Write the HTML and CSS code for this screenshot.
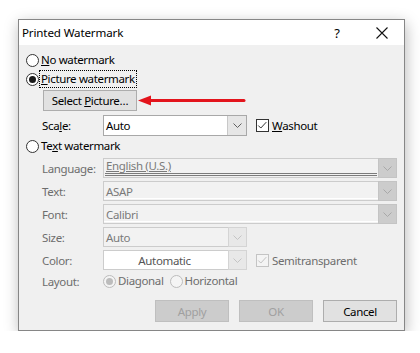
FILE: index.html
```html
<!DOCTYPE html>
<html>
<head>
<meta charset="utf-8">
<link rel="stylesheet" href="styles.css">
</head>
<body>
<div class="page">
  <div class="dialog">
    <div class="titlebar">
      <span class="title">Printed Watermark</span>
      <span class="tb-btn help">?</span>
      <span class="tb-btn close"><svg width="12" height="12" viewBox="0 0 12 12"><path d="M0.5 0.5 L11.5 11.5 M11.5 0.5 L0.5 11.5" stroke="#111" stroke-width="1.1" fill="none"/></svg></span>
    </div>
    <div class="content">
      <div class="row radio-row r1"><span class="radio"></span><span class="rlabel"><u>N</u>o watermark</span></div>
      <div class="row radio-row r2"><span class="radio checked"></span><span class="rlabel focus"><u>P</u>icture watermark</span></div>
      <div class="row btn-row">
        <span class="btn select-btn"><span>Select <u>P</u>icture…</span></span>
        <svg class="arrow" width="108" height="11" viewBox="0 0 108 11"><path d="M10 5.5 H106" stroke="#e3141c" stroke-width="3" stroke-linecap="round"/><path d="M0 5.5 L13 0.5 L13 10.5 Z" fill="#e3141c"/></svg>
      </div>
      <div class="row field-row scale-row">
        <span class="flabel">Sca<u>l</u>e:</span>
        <span class="combo small"><span class="ctext">Auto</span><span class="cbtn"><svg width="9" height="5" viewBox="0 0 9 5"><path d="M0.5 0.5 L4.5 4.5 L8.5 0.5" stroke="#606060" fill="none"/></svg></span></span>
        <span class="check checked"><svg width="13" height="11" viewBox="0 0 13 11"><path d="M1.5 5.5 L4.5 8.5 L11 1.5" stroke="#222" stroke-width="1.1" fill="none"/></svg></span>
        <span class="clabel"><u>W</u>ashout</span>
      </div>
      <div class="row radio-row r5"><span class="radio"></span><span class="rlabel">Te<u>x</u>t watermark</span></div>
      <div class="row field-row dis lang-row">
        <span class="flabel">Language:</span>
        <span class="combo wide disabled"><span class="ctext top"><span class="uline">English (U.S.)</span></span><span class="dbl"></span><span class="cbtn"><svg width="9" height="5" viewBox="0 0 9 5"><path d="M0.5 0.5 L4.5 4.5 L8.5 0.5" stroke="#a8a8a8" fill="none"/></svg></span></span>
      </div>
      <div class="row field-row dis">
        <span class="flabel">Text:</span>
        <span class="combo wide disabled edit"><span class="ctext">ASAP</span><span class="cbtn"><svg width="9" height="5" viewBox="0 0 9 5"><path d="M0.5 0.5 L4.5 4.5 L8.5 0.5" stroke="#a8a8a8" fill="none"/></svg></span></span>
      </div>
      <div class="row field-row dis">
        <span class="flabel">Font:</span>
        <span class="combo wide disabled edit"><span class="ctext">Calibri</span><span class="cbtn"><svg width="9" height="5" viewBox="0 0 9 5"><path d="M0.5 0.5 L4.5 4.5 L8.5 0.5" stroke="#a8a8a8" fill="none"/></svg></span></span>
      </div>
      <div class="row field-row dis">
        <span class="flabel">Size:</span>
        <span class="combo small disabled"><span class="ctext">Auto</span><span class="cbtn light"><svg width="9" height="5" viewBox="0 0 9 5"><path d="M0.5 0.5 L4.5 4.5 L8.5 0.5" stroke="#c4c4c4" fill="none"/></svg></span></span>
      </div>
      <div class="row field-row dis color-row">
        <span class="flabel">Color:</span>
        <span class="combo small disabled white"><span class="ctext center">Automatic</span><span class="cbtn light"><svg width="9" height="5" viewBox="0 0 9 5"><path d="M0.5 0.5 L4.5 4.5 L8.5 0.5" stroke="#c4c4c4" fill="none"/></svg></span></span>
        <span class="check dcheck"><svg width="13" height="11" viewBox="0 0 13 11"><path d="M1.5 5.5 L4.5 8.5 L11 1.5" stroke="#bdbdbd" stroke-width="1.1" fill="none"/></svg></span>
        <span class="clabel dtext">Semitransparent</span>
      </div>
      <div class="row field-row dis layout-row">
        <span class="flabel">Layout:</span>
        <span class="radio dradio checked"></span><span class="rlabel dtext">Diagonal</span>
        <span class="radio dradio h"></span><span class="rlabel dtext">Horizontal</span>
      </div>
      <div class="row buttons">
        <span class="btn dbtn">Apply</span>
        <span class="btn dbtn">OK</span>
        <span class="btn">Cancel</span>
      </div>
    </div>
  </div>
</div>
</body>
</html>
```

FILE: styles.css
```css
html, body { margin: 0; padding: 0; background: #fff; }
body { font-family: "Noto Sans", "DejaVu Sans", sans-serif; font-size: 11.5px; letter-spacing: -0.35px; color: #000; }
.page { padding: 19px 0 0 18px; }
.dialog {
  width: 387px; height: 312px; box-sizing: border-box;
  border: 1px solid #868686; background: #f0f0f0;
  box-shadow: 1px 4px 14px rgba(0,0,0,0.28);
  display: flex; flex-direction: column;
}
.titlebar {
  height: 25px; background: #fff; display: flex; align-items: center;
  padding-left: 3px; flex: none;
}
.title { flex: 1; font-size: 11.6px; letter-spacing: -0.15px; }
.tb-btn { width: 34px; height: 25px; display: flex; align-items: center; justify-content: center; }
.help { font-size: 13px; margin-right: 11px; }
.close { margin-right: 5px; }
.content { padding-top: 6px; display: flex; flex-direction: column; }
.row { display: flex; align-items: center; flex: none; }
.radio-row { height: 18px; padding-left: 7px; }
.r2 { margin-top: 1px; }
.r5 { margin-top: 1px; }
.radio {
  width: 13px; height: 13px; box-sizing: border-box; border: 1px solid #333;
  border-radius: 50%; background: #fff; flex: none; position: relative;
}
.radio.checked::after {
  content: ""; position: absolute; left: 2px; top: 2px; width: 7px; height: 7px;
  border-radius: 50%; background: #1a1a1a;
}
.rlabel { margin-left: 2px; line-height: 16px; }
.focus { outline: 1px dotted #000; outline-offset: 0; padding: 0 1px; margin-left: 1px; }
.btn-row { margin-top: 2px; height: 21px; padding-left: 24px; }
.btn {
  width: 74px; height: 100%; box-sizing: border-box; border: 1px solid #adadad;
  background: #e1e1e1; display: flex; align-items: center; justify-content: center;
}
.select-btn { width: 94px; }
.arrow { margin-left: 1px; display: block; }
.field-row { height: 20px; margin-top: 3px; padding-left: 23px; }
.scale-row { height: 21px; margin-top: 4px; }
.flabel { width: 61px; flex: none; }
.dis .flabel { color: #6d6d6d; }
.combo {
  height: 100%; box-sizing: border-box; border: 1px solid #a8a8a8; background: #fff;
  display: flex; align-items: stretch; position: relative; flex: none;
}
.combo.small { width: 144px; }
.combo.wide { width: 294px; }
.ctext { flex: 1; padding-left: 2px; display: flex; align-items: center; }
.ctext.top { align-items: flex-start; line-height: 14px; padding-top: 0; }
.ctext.center { justify-content: center; padding-left: 0; padding-right: 3px; }
.cbtn {
  width: 18px; background: #e6e6e6; border-left: 1px solid #c8c8c8;
  display: flex; align-items: center; justify-content: center;
}
.combo.disabled { border-color: #cccccc; background: #f2f2f2; color: #7a7a7a; }
.combo.disabled.white { background: #fff; color: #555; }
.combo.disabled .cbtn { background: #cccccc; border: 1px solid #c4c4c4; margin: -1px -1px -1px 0; width: 17px; }
.combo.disabled .cbtn.light { background: #e8e8e8; border-color: #d4d4d4; }
.uline { text-decoration: underline; }
.dbl {
  position: absolute; left: 1px; right: 19px; bottom: 1px; height: 3px;
  border-top: 1px solid #7b7b7b; border-bottom: 1px solid #7b7b7b; box-sizing: border-box;
}
.combo.edit::after {
  content: ""; position: absolute; left: 0; right: 18px; bottom: 1px; height: 1px; background: #fff;
}
.check {
  width: 13px; height: 13px; box-sizing: border-box; border: 1px solid #333; background: #fff;
  margin-left: 9px; flex: none; display: flex; align-items: center; justify-content: center;
}
.check svg { display: block; }
.dcheck { border-color: #c4c4c4; background: #f4f4f4; }
.clabel { margin-left: 3px; }
.dtext { color: #6d6d6d; }
.layout-row { height: 18px; margin-top: 2px; }
.dradio { border-color: #bcbcbc; background: #f4f4f4; }
.dradio.checked::after { background: #bcbcbc; }
.dradio.h { margin-left: 6px; }
.buttons { height: 22px; margin-top: 10px; justify-content: flex-end; padding-right: 7px; gap: 10px; }
.dbtn { background: #cccccc; border-color: #bfbfbf; color: #a0a0a0; }
```
